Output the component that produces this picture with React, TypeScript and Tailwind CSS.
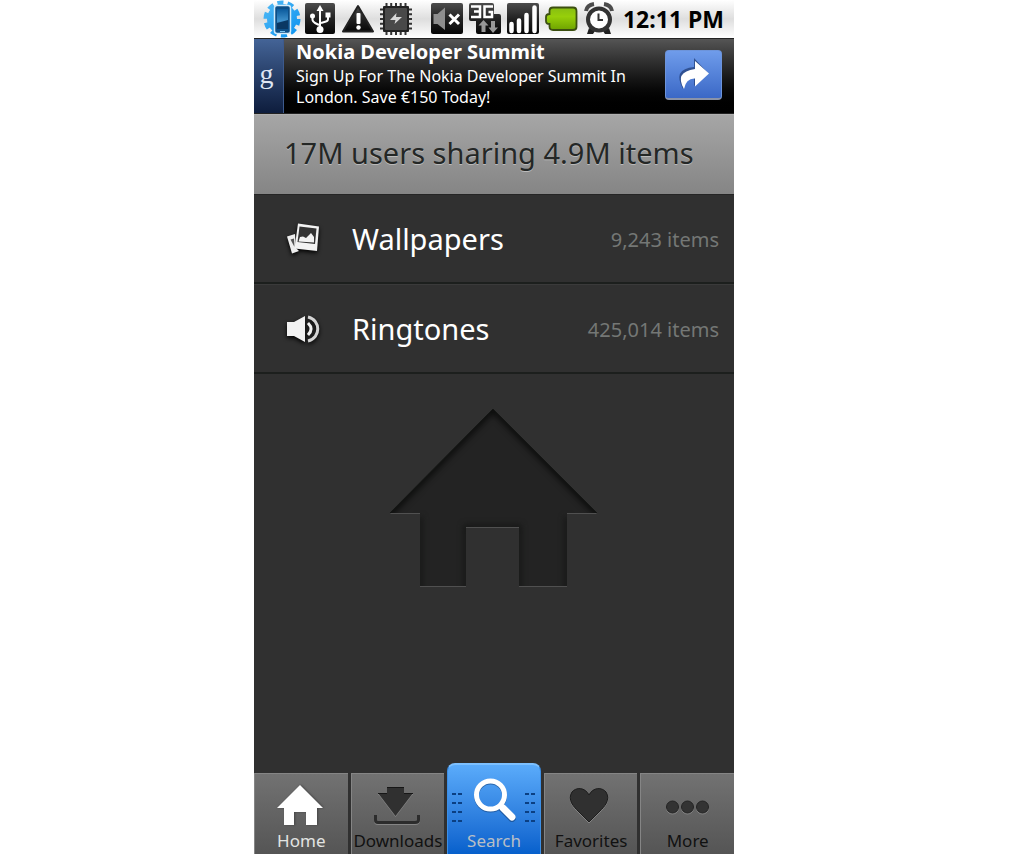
import type { ReactNode } from "react";

type IconProps = { children: ReactNode };

type Category = {
    name: string;
    count: string;
    icon: ReactNode;
};

type Tab = {
    label: string;
    icon: ReactNode;
    active?: boolean;
};

const HOUSE = "M107 4 L211 108 H181 V181 H133 V122 H80 V181 H34 V108 H4 Z";

const StatusIcon = ({ children }: IconProps) => (
    <svg width="38" height="38" viewBox="0 0 38 38" className="shrink-0" aria-hidden="true">
        {children}
    </svg>
);

const StatusDefs = () => (
    <svg width="0" height="0" className="absolute" aria-hidden="true">
        <defs>
            <linearGradient id="tile" x1="0" y1="0" x2="0" y2="1">
                <stop offset="0" stopColor="#4c4c4c" />
                <stop offset="0.5" stopColor="#222" />
                <stop offset="1" stopColor="#060606" />
            </linearGradient>
            <linearGradient id="gear" x1="0" y1="0" x2="1" y2="1">
                <stop offset="0" stopColor="#4fb8f5" />
                <stop offset="1" stopColor="#0d94f0" />
            </linearGradient>
            <linearGradient id="screen" x1="0" y1="0" x2="0" y2="1">
                <stop offset="0" stopColor="#0b5a9c" />
                <stop offset="0.6" stopColor="#3f92cc" />
                <stop offset="1" stopColor="#0a3a66" />
            </linearGradient>
            <linearGradient id="battery" x1="0" y1="0" x2="0" y2="1">
                <stop offset="0" stopColor="#86bd12" />
                <stop offset="0.4" stopColor="#97cf0a" />
                <stop offset="1" stopColor="#6ea300" />
            </linearGradient>
        </defs>
    </svg>
);

const GearIcon = () => (
    <StatusIcon>
        <circle cx="19" cy="19" r="16" fill="none" stroke="url(#gear)" strokeWidth="5" strokeDasharray="6 4.05" />
        <circle cx="19" cy="19" r="15" fill="url(#gear)" />
        <rect x="11.5" y="5.5" width="16" height="28" rx="2.5" fill="#0d4f87" stroke="#d3ecfa" strokeWidth="1.5" />
        <rect x="14" y="9" width="11" height="20" fill="url(#screen)" />
        <path d="M14 23 L25 20 V29 H14 Z" fill="#0a3863" />
        <path d="M17 31.5 H22" stroke="#7cc6f2" />
    </StatusIcon>
);

const UsbIcon = () => (
    <StatusIcon>
        <rect x="4" y="3" width="30" height="31" rx="2" fill="url(#tile)" />
        <g fill="none" stroke="#fff" strokeWidth="2">
            <path d="M19 8 V30" />
            <path d="M11.500 16 V20 Q12 22 14 23 L18 25" />
            <path d="M27 15 V19 Q27 21 25 21.500 L20 23" />
        </g>
        <path d="M15.500 11 L19 5 L22.500 11 Z" fill="#fff" />
        <circle cx="11.500" cy="16" r="2.500" fill="#fff" />
        <rect x="24.500" y="12.500" width="5" height="5" fill="#fff" />
        <circle cx="19" cy="29.500" r="3.500" fill="#fff" />
    </StatusIcon>
);

const WarningIcon = () => (
    <StatusIcon>
        <path d="M19 6 L34 31.500 H4 Z" fill="url(#tile)" stroke="#222" strokeWidth="2" strokeLinejoin="round" />
        <rect x="17.500" y="13" width="4" height="11" rx="1" fill="#fff" />
        <circle cx="19.500" cy="27.500" r="2.200" fill="#fff" />
    </StatusIcon>
);

const ChipIcon = () => (
    <StatusIcon>
        <path
            d="M9.500 3 V35 M14.200 3 V35 M19 3 V35 M23.700 3 V35 M28.500 3 V35 M3 9.500 H35 M3 14.200 H35 M3 19 H35 M3 23.700 H35 M3 28.500 H35"
            stroke="#333"
            strokeWidth="2"
        />
        <rect x="6" y="6" width="26" height="26" rx="1" fill="#222" />
        <rect x="8" y="8" width="22" height="22" rx="1" fill="#494949" />
        <path d="M13 20 L19.500 13 L19 17 L25 17 L17.500 24 L18.500 20 Z" fill="#d8d8d8" />
    </StatusIcon>
);

const MuteIcon = () => (
    <StatusIcon>
        <rect x="3" y="3" width="32" height="31" rx="2" fill="url(#tile)" />
        <path d="M5.500 14 H9.500 L17 7.500 V30 L9.500 24 H5.500 Z" fill="#8e8e8e" />
        <path d="M21.500 14.500 L31 24 M31 14.500 L21.500 24" stroke="#fff" strokeWidth="3" />
    </StatusIcon>
);

const NetworkIcon = () => (
    <StatusIcon>
        <path d="M5 3 H26 Q28 3 28 5 V14 H33 Q35 14 35 16 V32 Q35 34 33 34 H12 Q10 34 10 32 V21 H5 Q3 21 3 19 V5 Q3 3 5 3 Z" fill="url(#tile)" />
        <g fill="none" stroke="#fff" strokeWidth="2.500">
            <path d="M5 6.500 H14 V17 H5 M8 11.500 H14" />
            <path d="M27 6.500 H18.500 V17 H26 V12 H22.500" />
        </g>
        <path d="M17.500 20 L22.500 25.500 H19.500 V32 H15.500 V25.500 H12.500 Z" fill="#999" />
        <path d="M27 33 L22.500 27.500 H25 V21 H29 V27.500 H32 Z" fill="#999" />
    </StatusIcon>
);

const SignalIcon = () => (
    <StatusIcon>
        <rect x="3" y="3" width="32" height="31" rx="2" fill="url(#tile)" />
        <path d="M7.500 31 V24 M15 31 V20.500 M22.500 31 V15 M30.500 31 V7.500" stroke="#fff" strokeWidth="4.500" strokeLinecap="round" />
    </StatusIcon>
);

const BatteryIcon = () => (
    <StatusIcon>
        <path
            d="M11 7.500 H31 Q34.500 7.500 34.500 11 V27 Q34.500 30 31 30 H11 Q7.500 30 7.500 26.500 V24 Q4 24 4 21 V17 Q4 14 7.500 14 V11 Q7.500 7.500 11 7.500 Z"
            fill="url(#battery)"
            stroke="#3c4f10"
            strokeWidth="1.800"
        />
    </StatusIcon>
);

const AlarmIcon = () => (
    <StatusIcon>
        <path d="M6 11 Q7 5 14 4 M32 11 Q31 5 24 4" fill="none" stroke="#4c4c4c" strokeWidth="4" />
        <path d="M9 28 L7 34 H13 L15 31 M29 28 L31 34 H25 L23 31" fill="#222" />
        <circle cx="19" cy="19.500" r="11" fill="#fff" stroke="#333" strokeWidth="4" />
        <path d="M18.500 13.500 V20 H23" fill="none" stroke="#333" strokeWidth="2" />
    </StatusIcon>
);

const StatusBar = () => (
    <header className="flex h-[38px] items-center bg-linear-to-b from-white via-[#dedede] to-white pl-[9px] pr-[10px]">
        <StatusDefs />
        <GearIcon />
        <UsbIcon />
        <WarningIcon />
        <ChipIcon />
        <div className="ml-auto flex">
            <MuteIcon />
            <NetworkIcon />
            <SignalIcon />
            <BatteryIcon />
            <AlarmIcon />
        </div>
        <time className="pl-[5px] text-[23px] font-bold whitespace-nowrap text-black">12:11 PM</time>
    </header>
);

const AdBanner = () => (
    <section className="flex h-[76px] border-y border-[#222] bg-linear-to-b from-[#555] via-[#151515] via-55% to-black text-white">
        <div className="flex w-[30px] shrink-0 items-center justify-center border-r border-[#3d5a8c] bg-linear-to-b from-[#446497] to-[#0e1d3d] pr-1 pb-1 font-['Liberation_Serif',serif] text-[28px] text-[#dfe6f2]">
            g
        </div>
        <div className="min-w-0 flex-1 pl-3">
            <h2 className="pb-px text-[20px] leading-[26px] font-bold">Nokia Developer Summit</h2>
            <p className="text-[16px] leading-[21px]">
                Sign Up For The Nokia Developer Summit In London. Save €150 Today!
            </p>
        </div>
        <button
            type="button"
            aria-label="Open"
            className="mt-[11px] mr-3 h-[50px] w-[57px] shrink-0 rounded border border-b-2 border-[#6d94da] border-b-[#8a93a8] bg-linear-to-b from-[#6f9ceb] to-[#3b68c6]"
        >
            <svg width="55" height="47" viewBox="0 0 55 47" aria-hidden="true">
                <path d="M28 7 L42 22 L28 35 V27 Q19 26 17 38 Q6 18 28 16 Z" fill="#26437f" opacity="0.8" />
                <path d="M29 10 L43 22.500 L29 35.500 V27.500 Q20 27 18 38 Q8 21 29 18 Z" fill="#fff" />
            </svg>
        </button>
    </section>
);

const PhotosIcon = () => (
    <svg width="34" height="34" viewBox="0 0 34 34" className="drop-shadow-[0_2px_2px_#000]" aria-hidden="true">
        <path d="M1 14.500 L9 12 L10 26 L13 29 L6 31.500 Z" fill="#eee" />
        <path d="M4.500 17.500 L8 16.500 L8.500 25 Z" fill="#555" />
        <path d="M12 1.500 L33 4.500 L31 29 L8.500 26.500 Z" fill="#f2f2f2" />
        <path d="M13.500 4.500 L30.500 6.500 L29 22 L11.500 20 Z" fill="#333" />
        <path d="M12.500 19.500 L14 15 L17 14.500 L20 16 L25 11 L28 15 L28 20.500 Z" fill="#f2f2f2" />
    </svg>
);

const SpeakerIcon = () => (
    <svg width="34" height="34" viewBox="0 0 34 34" className="drop-shadow-[0_2px_2px_#000]" aria-hidden="true">
        <path d="M1 10 H8 L19 4 V30 L8 24 H1 Z" fill="#f2f2f2" />
        <path d="M22 11 Q28 17 22 23" fill="none" stroke="#f2f2f2" strokeWidth="3" />
        <path d="M22 5 C35 8 35 26 22 29" fill="none" stroke="#d5d5d5" strokeWidth="3" />
    </svg>
);

const categories: Category[] = [
    { name: "Wallpapers", count: "9,243 items", icon: <PhotosIcon /> },
    { name: "Ringtones", count: "425,014 items", icon: <SpeakerIcon /> },
];

const CategoryList = () => (
    <ul>
        {categories.map(c => (
            <li key={c.name} className="border-t border-b-2 border-t-[#3a3a3a] border-b-[#1c1f1d] first:border-t-[#252525]">
                <a href="#" className="flex h-[87px] items-center pl-8 pr-[15px]">
                    {c.icon}
                    <span className="pl-8 text-[29px] text-white">{c.name}</span>
                    <span className="ml-auto pt-[2px] text-[20px] text-[#747775]">{c.count}</span>
                </a>
            </li>
        ))}
    </ul>
);

// House pressed into the background, shaded under the roof and lit from below
const EmbossedHouse = () => (
    <svg width="217" height="186" viewBox="0 0 217 186" className="mx-auto mt-[31px]" aria-hidden="true">
        <defs>
            <filter id="soft" x="-10%" y="-10%" width="120%" height="120%" colorInterpolationFilters="sRGB">
                <feGaussianBlur stdDeviation="3" />
            </filter>
            <clipPath id="house">
                <path d={HOUSE} />
            </clipPath>
        </defs>
        <path d={HOUSE} fill="#505050" transform="translate(0 1)" />
        <path d={HOUSE} fill="#232323" />
        <g clipPath="url(#house)">
            <path d="M0 112 L107 4 L215 112" fill="none" stroke="#090a09" strokeWidth="6" filter="url(#soft)" />
            <path
                d="M34 112 V190 M181 112 V190 M80 190 V122 H133 V190"
                fill="none"
                stroke="#121312"
                strokeWidth="4"
                filter="url(#soft)"
            />
        </g>
        <path d="M4 108 L107 4 L211 108" fill="none" stroke="#151715" />
    </svg>
);

const HomeIcon = () => (
    <svg width="48" height="44" viewBox="0 0 48 44" className="drop-shadow-[1px_0_1px_#444]" aria-hidden="true">
        <path d="M23 2 L46 25 H40 V42 H29 V29 H17 V42 H7 V25 H0 Z" fill="#fff" />
    </svg>
);

const DownloadIcon = () => (
    <svg width="48" height="44" viewBox="0 0 48 44" className="drop-shadow-[0_1px_0_#858585]" aria-hidden="true">
        <path d="M13 4 H30 V10 H39 L21.500 33 L4 10 H13 Z" fill="#303030" />
        <path d="M13 4.500 H30 M4 10.500 H13 M30 10.500 H39" stroke="#161616" />
        <path d="M1.500 32 V37 Q1.500 39.500 4 39.500 H41 Q44.500 39.500 44.500 37 V32" fill="none" stroke="#2c2c2c" strokeWidth="3" />
    </svg>
);

const SearchIcon = () => (
    <svg width="88" height="53" viewBox="0 0 88 53" aria-hidden="true">
        <g stroke="#0b3f82" strokeWidth="2" strokeDasharray="4 2">
            <path d="M2 20 H12 M2 29 H12 M2 38 H12 M2 47 H12" />
            <path d="M75 20 H85 M75 29 H85 M75 38 H85 M75 47 H85" />
        </g>
        <g fill="none" stroke="#14427c" opacity="0.6" transform="translate(0 1)">
            <circle cx="40.500" cy="21" r="14" strokeWidth="5" />
            <path d="M52 33 L62 43" strokeWidth="8" strokeLinecap="round" />
        </g>
        <g fill="none" stroke="#fff">
            <circle cx="40.500" cy="21" r="14" strokeWidth="5" />
            <path d="M50 31 L52 33" strokeWidth="5" />
            <path d="M53 34 L62 43" strokeWidth="7" strokeLinecap="round" />
        </g>
    </svg>
);

const HeartIcon = () => (
    <svg width="48" height="44" viewBox="0 0 48 44" className="drop-shadow-[0_1px_0_#858585]" aria-hidden="true">
        <path d="M22 12 C26 4 35 4 39 9 C44 17 37 24 33 28 L22 39 L11 28 C7 24 0 17 5 9 C9 4 18 4 22 12 Z" fill="#303030" stroke="#1c1c1c" />
    </svg>
);

const MoreIcon = () => (
    <svg width="48" height="44" viewBox="0 0 48 44" className="drop-shadow-[0_1px_0_#858585]" aria-hidden="true">
        <g fill="#333" stroke="#222">
            <circle cx="8.500" cy="24" r="6" />
            <circle cx="23.500" cy="24" r="6" />
            <circle cx="38.500" cy="24" r="6" />
        </g>
    </svg>
);

const tabs: Tab[] = [
    { label: "Home", icon: <HomeIcon />, active: true },
    { label: "Downloads", icon: <DownloadIcon /> },
    { label: "Search", icon: <SearchIcon /> },
    { label: "Favorites", icon: <HeartIcon /> },
    { label: "More", icon: <MoreIcon /> },
];

const tabClass = (tab: Tab) => {
    if (tab.label === "Search") {
        return "h-[91px] rounded-t-lg border-t-2 border-x border-t-[#7cc0ff] border-x-[#3c8fe6] bg-linear-to-b from-[#5aabfa] to-[#0560cc] text-[#b9bfc6]";
    }
    return `h-[81px] border-t border-l border-[#858585] bg-linear-to-b from-[#727272] to-[#555] ${tab.active ? "text-[#e2e4e2]" : "text-[#111]"}`;
};

const TabBar = () => (
    <nav className="grid grid-cols-5 items-end gap-[3px]">
        {tabs.map(tab => (
            <button
                key={tab.label}
                type="button"
                className={`flex flex-col items-center justify-end pb-px text-[17px] leading-6 ${tabClass(tab)}`}
            >
                {tab.icon}
                <span className="pt-[2px]">{tab.label}</span>
            </button>
        ))}
    </nav>
);

export default function App() {
    return (
        <div className="min-h-screen bg-white pr-10 font-['Noto_Sans',sans-serif]">
            <main className="mx-auto flex min-h-screen max-w-[480px] flex-col bg-[#303030]">
                <StatusBar />
                <AdBanner />
                <h1 className="flex h-[80px] items-center border-t border-[#b0b0b0] bg-linear-to-b from-[#a6a6a6] to-[#858585] pb-1 pl-[30px] text-[29px] text-[#242726] text-shadow-[0_1px_0_#bbb]">
                    17M users sharing 4.9M items
                </h1>
                <CategoryList />
                <div className="flex-1">
                    <EmbossedHouse />
                </div>
                <TabBar />
            </main>
        </div>
    );
}
